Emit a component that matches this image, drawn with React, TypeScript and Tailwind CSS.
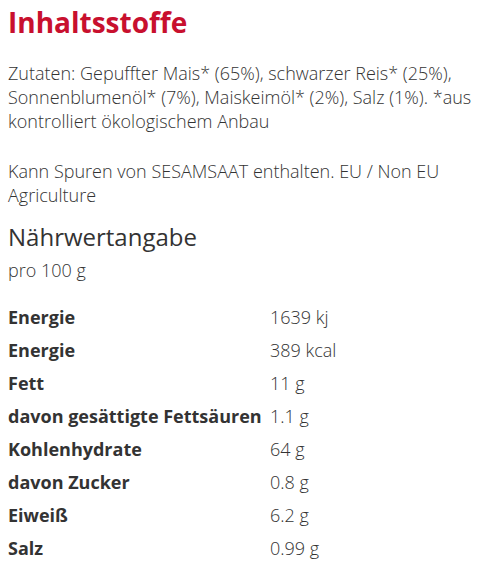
import React from 'react';

const rows: [string, string][] = [
  ['Energie', '1639 kj'],
  ['Energie', '389 kcal'],
  ['Fett', '11 g'],
  ['davon gesättigte Fettsäuren', '1.1 g'],
  ['Kohlenhydrate', '64 g'],
  ['davon Zucker', '0.8 g'],
  ['Eiweiß', '6.2 g'],
  ['Salz', '0.99 g'],
];

export default function App() {
  return (
    <div className="min-h-screen bg-white pl-2 pt-[4px] text-[#333] font-['Open_Sans',sans-serif]">
      {/* Zutaten */}
      <h2 className="text-[28px] font-bold leading-[36px] text-[#c8102e]">Inhaltsstoffe</h2>
      <p className="mt-[21px] text-lg font-light leading-6">
        Zutaten: Gepuffter Mais* (65%), schwarzer Reis* (25%), Sonnenblumenöl* (7%), Maiskeimöl* (2%), Salz (1%). *aus kontrolliert ökologischem Anbau
      </p>
      <p className="mt-[26px] text-lg font-light leading-6">
        Kann Spuren von SESAMSAAT enthalten. EU / Non EU Agriculture
      </p>

      {/* Nährwerte */}
      <h3 className="mt-[14px] text-2xl font-normal leading-8">Nährwertangabe</h3>
      <p className="mt-[5px] text-lg font-light leading-6">pro 100 g</p>

      <div className="mt-[23px] grid grid-cols-[262px_1fr]">
        {rows.map(([label, value], i) => (
          <React.Fragment key={i}>
            <div className="h-[33px] text-lg font-bold leading-6">{label}</div>
            <div className="h-[33px] text-lg font-light leading-6">{value}</div>
          </React.Fragment>
        ))}
      </div>
    </div>
  );
}
